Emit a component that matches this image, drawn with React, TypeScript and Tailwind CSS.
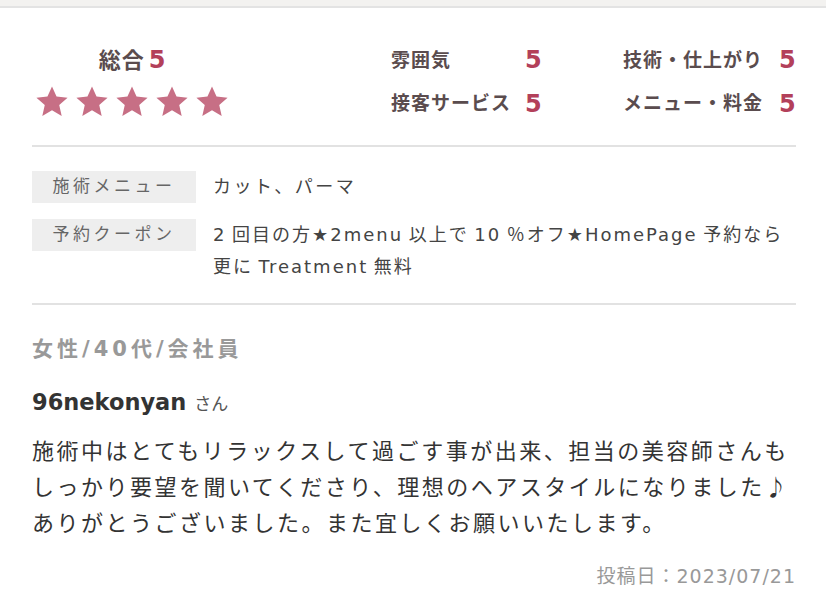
import React from "react";

const ratings = [
  { label: "雰囲気", score: 5 },
  { label: "技術・仕上がり", score: 5 },
  { label: "接客サービス", score: 5 },
  { label: "メニュー・料金", score: 5 },
];

const Star = () => (
  <svg viewBox="0 0 24 24" className="w-[34px] h-[34px]">
    <path
      d="M12 1l3.2 7.2 7.8.75-5.9 5.2 1.75 7.75L12 17.9l-6.85 4 1.75-7.75L1 8.95l7.8-.75z"
      fill="#c76f85"
    />
  </svg>
);

const App = () => {
  return (
    <div className="w-[828px] h-[594px] bg-white font-['DejaVu_Sans','Noto_Sans_CJK_JP',sans-serif] overflow-hidden">
      <div className="h-[8px] mr-[2px] bg-[#f3f2f0] border-b-2 border-[#e3e3e3]" />

      <div className="px-[32px]">
        {/* Ratings */}
        <div className="flex pt-[37px] pb-[26px]">
          <div className="w-[200px] flex flex-col items-center">
            <div className="h-[30px] flex items-center">
              <span className="text-[22px] font-bold text-[#5a4c4e] tracking-[1px]">
                総合
              </span>
              <span className="text-[24px] font-bold text-[#b3405a] ml-[4px]">
                5
              </span>
            </div>
            <div className="flex gap-[6px] mt-[10px]">
              {[0, 1, 2, 3, 4].map((i) => (
                <Star key={i} />
              ))}
            </div>
          </div>

          <div className="ml-[159px] grid grid-cols-[134px_98px_156px_auto] gap-y-[13px]">
            {ratings.map((r) => (
              <React.Fragment key={r.label}>
                <div className="h-[30px] flex items-center text-[19px] font-bold tracking-[1px] text-[#5a4c4e]">
                  {r.label}
                </div>
                <div className="h-[30px] flex items-center text-[24px] font-bold text-[#b3405a]">
                  {r.score}
                </div>
              </React.Fragment>
            ))}
          </div>
        </div>

        <div className="h-[2px] bg-[#e2e2e2]" />

        {/* Menu / coupon */}
        <div className="pt-[24px] pb-[20px] flex flex-col gap-[16px]">
          <div className="flex gap-[17px]">
            <div className="w-[164px] h-[32px] shrink-0 bg-[#eeeeee] flex items-center justify-center text-[17px] tracking-[3.5px] text-[#666]">
              施術メニュー
            </div>
            <p className="text-[18px] leading-[32px] tracking-[2.5px] text-[#444]">
              カット、パーマ
            </p>
          </div>
          <div className="flex gap-[17px]">
            <div className="w-[164px] h-[32px] shrink-0 bg-[#eeeeee] flex items-center justify-center text-[17px] tracking-[3.5px] text-[#666]">
              予約クーポン
            </div>
            <p className="text-[18px] leading-[32px] tracking-[2px] text-[#444]">
              2&#8201;回目の方★2menu&#8201;以上で&#8201;10&#8201;％オフ★HomePage&#8201;予約なら更に&#8201;Treatment&#8201;無料
            </p>
          </div>
        </div>

        <div className="h-[2px] bg-[#e2e2e2]" />

        {/* Review */}
        <div className="pt-[29px]">
          <p className="text-[21px] leading-[30px] font-bold tracking-[4px] text-[#999]">
            女性/40代/会社員
          </p>
          <p className="mt-[23px] leading-[30px] text-[#333]">
            <span className="text-[22.5px] font-bold">96nekonyan</span>
            <span className="text-[17px] ml-[8px] text-[#555]">さん</span>
          </p>
          <p className="mt-[14px] text-[22px] leading-[36px] tracking-[2.5px] text-[#333]">
            施術中はとてもリラックスして過ごす事が出来、担当の美容師さんも
            <br />
            しっかり要望を聞いてくださり、理想のヘアスタイルになりました
            <span className="font-['Noto_Sans_CJK_JP',sans-serif] leading-none">♪</span>
            <br />
            ありがとうございました。また宜しくお願いいたします。
          </p>
          <p className="mt-[20px] text-right text-[19px] leading-[28px] tracking-[1px] text-[#999]">
            投稿日：2023/07/21
          </p>
        </div>
      </div>
    </div>
  );
};

export default App;
